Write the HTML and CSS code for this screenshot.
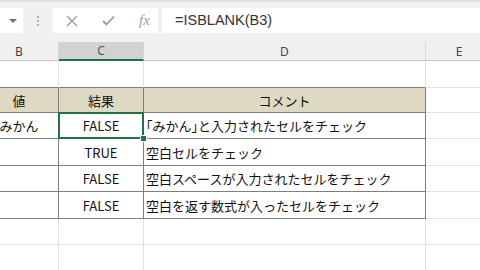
FILE: index.html
```html
<!DOCTYPE html>
<html lang="ja">
<head>
    <meta charset="UTF-8">
    <title>ISBLANK</title>
    <link rel="stylesheet" href="styles.css">
</head>
<body>

    <div class="toolbar">
        <div class="name-box"><span class="caret"></span></div>
        <div class="grip"><i></i><i></i><i></i></div>
        <div class="fx-box">
            <svg class="icon" width="12" height="12" viewBox="0 0 12 12">
                <path d="M1 1 L11 11 M11 1 L1 11" stroke="#9b9b9b" stroke-width="1.4" fill="none"/>
            </svg>
            <svg class="icon" width="13" height="11" viewBox="0 0 13 11">
                <path d="M1 6 L4.5 9.5 L12 1.5" stroke="#9b9b9b" stroke-width="1.8" fill="none"/>
            </svg>
            <span class="fx">fx</span>
        </div>
        <div class="formula">=ISBLANK(B3)</div>
    </div>

    <div class="sheet">
        <!-- 列見出し -->
        <div class="col-head">B</div>
        <div class="col-head active">C</div>
        <div class="col-head">D</div>
        <div class="col-head">E</div>

        <!-- 2行目 -->
        <div class="cell top"></div>
        <div class="cell top"></div>
        <div class="cell top"></div>
        <div class="cell"></div>

        <!-- 表 -->
        <div class="cell tbl head">値</div>
        <div class="cell tbl head">結果</div>
        <div class="cell tbl head">コメント</div>
        <div class="cell"></div>

        <div class="cell tbl">みかん</div>
        <div class="cell tbl selected">FALSE</div>
        <div class="cell tbl left"><span class="kakko">「</span>みかん<span class="kakko">」</span>と入力されたセルをチェック</div>
        <div class="cell"></div>

        <div class="cell tbl"></div>
        <div class="cell tbl">TRUE</div>
        <div class="cell tbl left">空白セルをチェック</div>
        <div class="cell"></div>

        <div class="cell tbl"></div>
        <div class="cell tbl">FALSE</div>
        <div class="cell tbl left">空白スペースが入力されたセルをチェック</div>
        <div class="cell"></div>

        <div class="cell tbl"></div>
        <div class="cell tbl">FALSE</div>
        <div class="cell tbl left">空白を返す数式が入ったセルをチェック</div>
        <div class="cell"></div>

        <div class="cell"></div>
        <div class="cell"></div>
        <div class="cell"></div>
        <div class="cell"></div>

        <div class="cell"></div>
        <div class="cell"></div>
        <div class="cell"></div>
        <div class="cell"></div>
    </div>

</body>
</html>
```

FILE: styles.css
```css
body {
    margin: 0;
    overflow: hidden;
    background: #ffffff;
    font-family: "Noto Sans CJK JP", "Noto Sans", sans-serif;
}

/* 数式バー */
.toolbar {
    height: 42px;
    box-sizing: border-box;
    padding-top: 8px;
    background: #f0f0f0;
    border-top: 2px solid #e2e2e2;
    display: flex;
    align-items: flex-start;
}

.name-box {
    width: 23px;
    height: 25px;
    margin-top: -2px;
    background: #ffffff;
    display: flex;
    align-items: center;
    justify-content: flex-end;
}

.caret {
    width: 0;
    height: 0;
    margin-right: 6px;
    border-left: 4px solid transparent;
    border-right: 4px solid transparent;
    border-top: 4px solid #6d6d6d;
}

.grip {
    width: 30px;
    height: 25px;
    margin-top: -2px;
    display: flex;
    flex-direction: column;
    align-items: center;
    justify-content: center;
    gap: 2px;
}

.grip i {
    width: 2px;
    height: 2px;
    background: #b4b4b4;
}

.fx-box {
    width: 105px;
    height: 25px;
    margin-top: -2px;
    background: #ffffff;
    display: flex;
    align-items: center;
    padding-left: 13px;
    box-sizing: border-box;
    gap: 24px;
}

.fx {
    font-family: "Liberation Serif", serif;
    font-style: italic;
    font-size: 15px;
    color: #a0a0a0;
}

.formula {
    flex: 1;
    height: 25px;
    margin-top: -2px;
    margin-left: 4px;
    background: #ffffff;
    padding-left: 13px;
    font-family: "Liberation Sans", sans-serif;
    font-size: 14.5px;
    line-height: 25px;
    color: #333333;
}

/* シート */
.sheet {
    margin-left: -20px;
    display: grid;
    grid-template-columns: 79px 85px 282px 67px;
    grid-template-rows: 19px 27px 25px 26px 27px 26px 27px 26px 27px;
    background: #f0f0f0;
}

.col-head {
    box-sizing: border-box;
    border-right: 1px solid #d5d5d5;
    border-bottom: 1px solid #c6c6c6;
    font-family: "Noto Sans", sans-serif;
    font-size: 12px;
    color: #444444;
    display: flex;
    align-items: center;
    justify-content: center;
}

.col-head:last-child {
    border-right: none;
}

.col-head.active {
    background: #d2d2d2;
    color: #1e6e47;
    border-bottom: 2px solid #217346;
}

.cell {
    box-sizing: border-box;
    background: #ffffff;
    border-right: 1px solid #e1e1e1;
    border-bottom: 1px solid #e1e1e1;
    font-size: 13px;
    color: #111111;
    display: flex;
    align-items: center;
    justify-content: center;
    white-space: nowrap;
}

.cell.top {
    border-bottom-color: #7f7f7f;
}

.cell.tbl {
    border-right-color: #7f7f7f;
    border-bottom-color: #7f7f7f;
}

.cell.head {
    background: #ddd9c3;
}

.cell.left {
    justify-content: flex-start;
    padding-left: 2px;
}

.kakko {
    font-feature-settings: "halt";
}

.cell.selected {
    position: relative;
}

.cell.selected::after {
    content: "";
    position: absolute;
    top: -1px;
    left: -1px;
    right: -1px;
    bottom: -1px;
    border: 2px solid #217346;
}

.cell.selected::before {
    content: "";
    position: absolute;
    right: -4px;
    bottom: -4px;
    width: 5px;
    height: 5px;
    background: #217346;
    border: 1px solid #ffffff;
    z-index: 1;
}
```
